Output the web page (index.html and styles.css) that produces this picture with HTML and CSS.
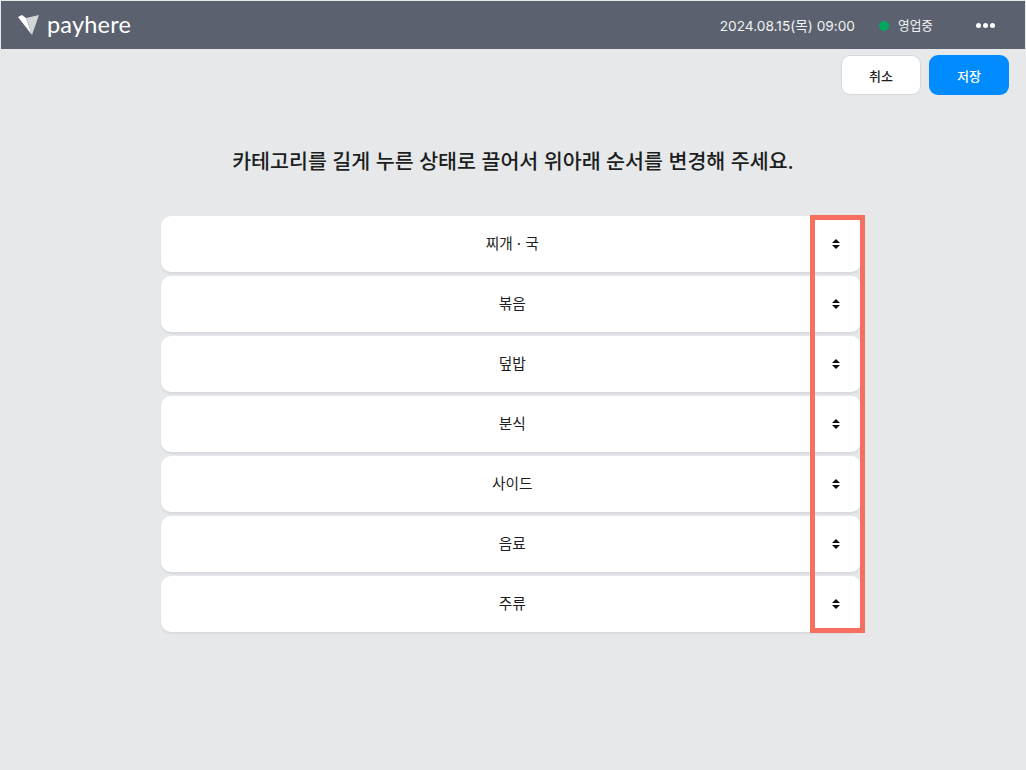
FILE: index.html
```html
<!DOCTYPE html>
<html lang="ko">
<head>
	<meta charset="UTF-8">
	<title>카테고리 순서 변경</title>
	<link rel="stylesheet" href="styles.css">
</head>
<body>
	<!-- 상단 바 -->
	<header class="top_bar">
		<div class="logo">
			<svg class="logo_mark" width="22" height="22" viewBox="0 0 22 22">
				<polygon points="0,3 4,1 8,4 14,21" fill="#ffffff"/>
				<polygon points="8,4 21,1 14,21" fill="#d3d5d9"/>
			</svg>
			<span class="logo_text">payhere</span>
		</div>
		<div class="top_info">
			<span class="date">2024.08.15(목) 09:00</span>
			<span class="status"><i class="status_dot"></i>영업중</span>
			<span class="more"><i></i><i></i><i></i></span>
		</div>
	</header>

	<!-- 버튼 -->
	<div class="actions">
		<button class="btn btn_cancel">취소</button>
		<button class="btn btn_save">저장</button>
	</div>

	<h1 class="guide">카테고리를 길게 누른 상태로 끌어서 위아래 순서를 변경해 주세요.</h1>

	<!-- 카테고리 목록 -->
	<ul class="cat_list">
		<li><span class="cat_name">찌개 · 국</span><span class="handle"><i class="up"></i><i class="down"></i></span></li>
		<li><span class="cat_name">볶음</span><span class="handle"><i class="up"></i><i class="down"></i></span></li>
		<li><span class="cat_name">덮밥</span><span class="handle"><i class="up"></i><i class="down"></i></span></li>
		<li><span class="cat_name">분식</span><span class="handle"><i class="up"></i><i class="down"></i></span></li>
		<li><span class="cat_name">사이드</span><span class="handle"><i class="up"></i><i class="down"></i></span></li>
		<li><span class="cat_name">음료</span><span class="handle"><i class="up"></i><i class="down"></i></span></li>
		<li><span class="cat_name">주류</span><span class="handle"><i class="up"></i><i class="down"></i></span></li>
		<li class="highlight"></li>
	</ul>
</body>
</html>
```

FILE: styles.css
```css
* {
	margin: 0;
	padding: 0;
	box-sizing: border-box;
}

body {
	background-color: #e6e8ea;
	font-family: "Inter", "Noto Sans CJK KR", sans-serif;
	color: #1c1e21;
	height: 770px;
	overflow: hidden;
}

.top_bar {
	height: 48px;
	margin: 1px 1px 0;
	background-color: #5b616e;
	display: flex;
	justify-content: space-between;
	align-items: center;
	color: #fff;
}

.logo {
	display: flex;
	align-items: center;
	margin-left: 17px;
}

.logo_mark {
	margin-right: 7px;
}

.logo_text {
	font-family: "Lato", sans-serif;
	font-size: 23.5px;
	line-height: 28px;
	letter-spacing: 0.2px;
	margin-top: -3px;
}

.top_info {
	display: flex;
	align-items: center;
	font-size: 13.7px;
	color: #f1f2f4;
}

.date {
	margin-right: 24px;
}

.status {
	display: flex;
	align-items: center;
	margin-right: 43px;
	margin-top: -2px;
	font-size: 12.7px;
}

.status_dot {
	width: 10px;
	height: 10px;
	border-radius: 50%;
	background-color: #00a862;
	margin: 3px 9px 0 0;
}

.more {
	display: flex;
	gap: 2px;
	margin-right: 30px;
}

.more i {
	width: 5px;
	height: 5px;
	border-radius: 50%;
	background-color: #fff;
}

.actions {
	display: flex;
	justify-content: flex-end;
	gap: 8px;
	padding: 6px 17px 0 0;
}

.btn {
	width: 80px;
	height: 40px;
	border-radius: 9px;
	font-family: inherit;
	font-size: 13px;
	font-weight: 500;
}

.btn_cancel {
	background-color: #fff;
	border: 1px solid #d5d8dc;
	color: #1c1e21;
}

.btn_save {
	background-color: #008cff;
	border: 0;
	color: #fff;
}

.guide {
	margin-top: 53px;
	text-align: center;
	font-size: 20.6px;
	line-height: 28px;
	font-weight: 500;
}

.cat_list {
	list-style: none;
	width: 700px;
	margin: 40px 0 0 161px;
	position: relative;
	display: flex;
	flex-direction: column;
	gap: 4px;
}

.cat_list li {
	height: 56px;
	background-color: #fff;
	border-radius: 10px;
	box-shadow: 0 2px 2px #d8dadd;
	display: flex;
	align-items: center;
}

.cat_name {
	width: 707px;
	text-align: center;
	font-size: 14.7px;
	line-height: 20px;
	font-weight: 400;
}

.handle {
	width: 50px;
	margin-left: -52px;
	display: flex;
	flex-direction: column;
	align-items: center;
	gap: 2px;
}

.up, .down {
	width: 0;
	height: 0;
	border-left: 4px solid transparent;
	border-right: 4px solid transparent;
}

.up {
	border-bottom: 4px solid #111;
}

.down {
	border-top: 4px solid #111;
}

.cat_list .highlight {
	position: absolute;
	left: 649px;
	top: -1px;
	bottom: -1px;
	width: 55px;
	height: auto;
	background: none;
	border-radius: 0;
	box-shadow: none;
	border: 5px solid #f76f61;
}
```
